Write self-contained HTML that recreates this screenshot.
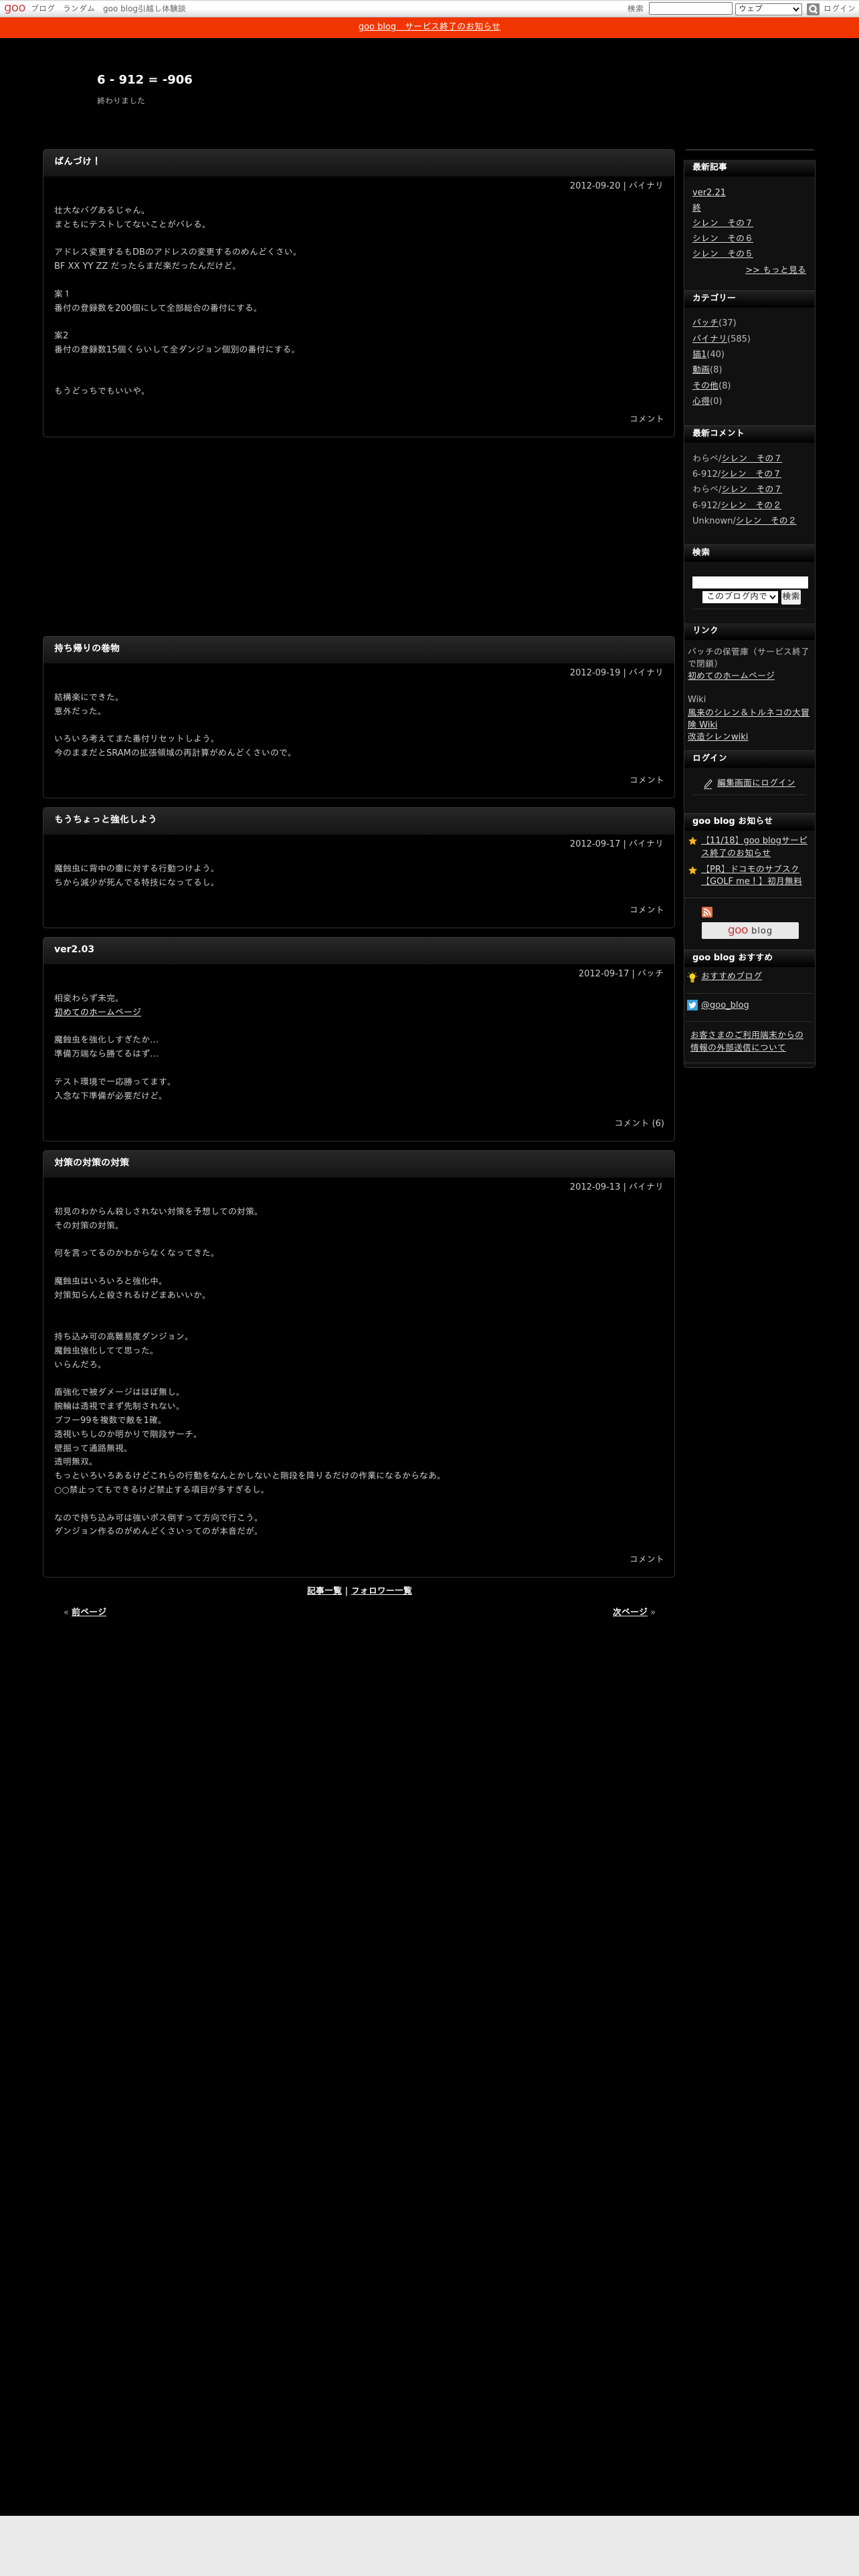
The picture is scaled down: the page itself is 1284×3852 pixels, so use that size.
<!DOCTYPE html>
<html lang="ja"><head><meta charset="utf-8"><title>6 - 912 = -906</title>
<style>
html,body{margin:0;padding:0;background:#e9e9e9}
#page{position:relative;width:1284px;height:3852px;overflow:hidden;background:#e9e9e9;font-family:"DejaVu Sans","IPAGothic",sans-serif;font-size:13px;color:#ccc}
#black{position:absolute;left:0;top:0;width:1284px;height:3762px;background:#000}
.a{position:absolute;white-space:nowrap}
a{color:#eee;text-decoration:underline}
#top{position:absolute;left:0;top:0;width:1284px;height:26px;border-top:1px solid #ccc;box-sizing:border-box;background:linear-gradient(#fff 0,#fff 50%,#ddd 100%);border-bottom:1px solid #bbb}
#top .a{font-size:12px;color:#666;line-height:16px;top:4px}
#notice{position:absolute;left:0;top:26px;width:1284px;height:31px;background:#f03500;text-align:center;line-height:30px;font-size:13px}
#notice a{color:#fff}
.post{position:absolute;left:64px;width:945px;box-sizing:border-box;border:1px solid #333;border-radius:5px;background:#000}
.post h2{margin:0;height:40px;padding:0 0 0 16px;line-height:37px;font-size:14px;font-weight:bold;color:#fff;background:linear-gradient(#282828,#141414);border-radius:4px 4px 0 0}
.post .d{position:absolute;right:16px;top:46px;line-height:18px;font-size:13px;white-space:nowrap}
.post .b{position:absolute;left:16px;top:82px;line-height:20.8px;font-size:13px;white-space:nowrap}
.post .c{position:absolute;right:15px;bottom:16px;line-height:18px;font-size:13px;white-space:nowrap}
#side{position:absolute;left:1022px;top:223px;width:197px;height:1374px;box-sizing:border-box;border:1px solid #333;border-top:2px solid #333;border-radius:5px;background:#111}
#cap{position:absolute;left:1022px;top:225px;width:197px;height:14px;background:#000}
.sh{position:absolute;left:1023px;width:195px;height:25px;background:linear-gradient(#222,#000);color:#fff;font-weight:bold;font-size:13px;line-height:24px;padding-left:12px;box-sizing:border-box}
.dv{position:absolute;left:1023px;width:195px;height:1px;background:#333}
.ln{position:absolute;height:1px;background:#2c2c2c}
.s{position:absolute;white-space:nowrap;line-height:18px;font-size:13px;color:#bbb}
.s a{color:#ddd}
</style></head><body>
<div id="page">
<div id="black"></div>

<div id="top">
<span class="a" style="left:6px;top:0;font-size:18px;line-height:22px;color:#c4444a;letter-spacing:-.5px">goo</span>
<span class="a" style="left:46px">ブログ</span>
<span class="a" style="left:94px">ランダム</span>
<span class="a" style="left:154px">goo blog引越し体験談</span>
<span class="a" style="left:938px">検索</span>
<span class="a" style="left:970px;top:2px;width:125px;height:19px;box-sizing:border-box;background:#fff;border:1px solid #777;border-radius:2px"></span>
<span class="a" style="left:1099px;top:4px;width:100px;height:18px;box-sizing:border-box;background:#fff;border:1px solid #777;border-radius:2px;line-height:15px;padding-left:4px;color:#333">ウェブ<svg style="position:absolute;right:3px;top:4px" width="10" height="8" viewBox="0 0 10 8"><path d="M1 1.5L5 6L9 1.5" fill="none" stroke="#111" stroke-width="2"/></svg></span>
<svg class="a" style="left:1206px;top:4px" width="19" height="18" viewBox="0 0 19 18"><rect width="19" height="18" rx="2" fill="#888"/><circle cx="9" cy="8" r="4.5" fill="none" stroke="#fff" stroke-width="2.4"/><path d="M12 11l3 4" stroke="#fff" stroke-width="2.4"/></svg>
<span class="a" style="left:1231px">ログイン</span>
</div>
<div id="notice"><a href="#">goo blog　サービス終了のお知らせ</a></div>

<div class="a" style="left:145px;top:108px;font-size:18px;line-height:24px;font-weight:bold;color:#fff">6 - 912 = -906</div>
<div class="a" style="left:145px;top:142px;font-size:12px;line-height:18px;color:#bbb">終わりました</div>

<div class="post" style="top:223px;height:431px"><h2>ばんづけ！</h2>
<div class="d">2012-09-20 | バイナリ</div>
<div class="b">壮大なバグあるじゃん。<br>まともにテストしてないことがバレる。<br><br>アドレス変更するもDBのアドレスの変更するのめんどくさい。<br>BF XX YY ZZ だったらまだ楽だったんだけど。<br><br>案１<br>番付の登録数を200個にして全部総合の番付にする。<br><br>案2<br>番付の登録数15個くらいして全ダンジョン個別の番付にする。<br><br><br>もうどっちでもいいや。</div>
<div class="c">コメント</div></div>

<div class="post" style="top:951px;height:243px"><h2>持ち帰りの巻物</h2>
<div class="d">2012-09-19 | バイナリ</div>
<div class="b">結構楽にできた。<br>意外だった。<br><br>いろいろ考えてまた番付リセットしよう。<br>今のままだとSRAMの拡張領域の再計算がめんどくさいので。</div>
<div class="c">コメント</div></div>

<div class="post" style="top:1207px;height:181px"><h2>もうちょっと強化しよう</h2>
<div class="d">2012-09-17 | バイナリ</div>
<div class="b">魔蝕虫に背中の壷に対する行動つけよう。<br>ちから減少が死んでる特技になってるし。</div>
<div class="c">コメント</div></div>

<div class="post" style="top:1401px;height:306px"><h2>ver2.03</h2>
<div class="d">2012-09-17 | バッチ</div>
<div class="b">相変わらず未完。<br><a href="#">初めてのホームページ</a><br><br>魔蝕虫を強化しすぎたか…<br>準備万端なら勝てるはず…<br><br>テスト環境で一応勝ってます。<br>入念な下準備が必要だけど。</div>
<div class="c">コメント (6)</div></div>

<div class="post" style="top:1720px;height:639px"><h2>対策の対策の対策</h2>
<div class="d">2012-09-13 | バイナリ</div>
<div class="b">初見のわからん殺しされない対策を予想しての対策。<br>その対策の対策。<br><br>何を言ってるのかわからなくなってきた。<br><br>魔蝕虫はいろいろと強化中。<br>対策知らんと殺されるけどまあいいか。<br><br><br>持ち込み可の高難易度ダンジョン。<br>魔蝕虫強化してて思った。<br>いらんだろ。<br><br>盾強化で被ダメージはほぼ無し。<br>腕輪は透視でまず先制されない。<br>ブフー99を複数で敵を1確。<br>透視いちしのか明かりで階段サーチ。<br>壁掘って通路無視。<br>透明無双。<br>もっといろいろあるけどこれらの行動をなんとかしないと階段を降りるだけの作業になるからなあ。<br>○○禁止ってもできるけど禁止する項目が多すぎるし。<br><br>なので持ち込み可は強いボス倒すって方向で行こう。<br>ダンジョン作るのがめんどくさいってのが本音だが。</div>
<div class="c">コメント</div></div>

<div class="a" style="left:459px;top:2371px;line-height:18px;font-weight:bold;color:#ddd"><a href="#">記事一覧</a> | <a href="#">フォロワー一覧</a></div>
<div class="a" style="left:95px;top:2403px;line-height:18px;color:#aaa">« <a href="#" style="font-weight:bold">前ページ</a></div>
<div class="a" style="left:916px;top:2403px;line-height:18px;color:#aaa"><a href="#" style="font-weight:bold">次ページ</a> »</div>

<div id="side"></div><div id="cap"></div>

<div class="sh" style="top:239px">最新記事</div>
<div class="s" style="left:1035px;top:280px"><a href="#">ver2.21</a></div>
<div class="s" style="left:1035px;top:303px"><a href="#">終</a></div>
<div class="s" style="left:1035px;top:326px"><a href="#">シレン　その７</a></div>
<div class="s" style="left:1035px;top:349px"><a href="#">シレン　その６</a></div>
<div class="s" style="left:1035px;top:372px"><a href="#">シレン　その５</a></div>
<div class="s" style="right:79px;top:396px"><a href="#">&gt;&gt; もっと見る</a></div>
<div class="dv" style="top:434px"></div>

<div class="sh" style="top:435px">カテゴリー</div>
<div class="s" style="left:1035px;top:475px"><a href="#">バッチ</a>(37)</div>
<div class="s" style="left:1035px;top:499px"><a href="#">バイナリ</a>(585)</div>
<div class="s" style="left:1035px;top:522px"><a href="#">猫1</a>(40)</div>
<div class="s" style="left:1035px;top:545px"><a href="#">動画</a>(8)</div>
<div class="s" style="left:1035px;top:569px"><a href="#">その他</a>(8)</div>
<div class="s" style="left:1035px;top:592px"><a href="#">心得</a>(0)</div>
<div class="dv" style="top:636px"></div>

<div class="sh" style="top:637px">最新コメント</div>
<div class="s" style="left:1035px;top:678px">わらべ/<a href="#">シレン　その７</a></div>
<div class="s" style="left:1035px;top:701px">6-912/<a href="#">シレン　その７</a></div>
<div class="s" style="left:1035px;top:724px">わらべ/<a href="#">シレン　その７</a></div>
<div class="s" style="left:1035px;top:748px">6-912/<a href="#">シレン　その２</a></div>
<div class="s" style="left:1035px;top:771px">Unknown/<a href="#">シレン　その２</a></div>
<div class="dv" style="top:814px"></div>

<div class="sh" style="top:815px">検索</div>
<div class="a" style="left:1035px;top:862px;width:173px;height:18px;background:#fff"></div>
<div class="a" style="left:1050px;top:884px;width:113px;height:18px;background:#fff;color:#222;line-height:17px;padding-left:6px;box-sizing:border-box">このブログ内で<svg style="position:absolute;right:3px;top:5px" width="10" height="8" viewBox="0 0 10 8"><path d="M1 1.5L5 6L9 1.5" fill="none" stroke="#111" stroke-width="2"/></svg></div>
<div class="a" style="left:1168px;top:882px;width:29px;height:22px;background:#efefef;color:#222;line-height:21px;text-align:center;border-radius:2px">検索</div>
<div class="ln" style="left:1037px;top:910px;width:166px"></div>

<div class="sh" style="top:932px">リンク</div>
<div class="s" style="left:1028px;top:967px">バッチの保管庫（サービス終了</div>
<div class="s" style="left:1028px;top:985px">で閉鎖）</div>
<div class="s" style="left:1028px;top:1003px"><a href="#">初めてのホームページ</a></div>
<div class="s" style="left:1028px;top:1038px">Wiki</div>
<div class="s" style="left:1028px;top:1058px"><a href="#">風来のシレン＆トルネコの大冒</a></div>
<div class="s" style="left:1028px;top:1076px"><a href="#">険 Wiki</a></div>
<div class="s" style="left:1028px;top:1094px"><a href="#">改造シレンwiki</a></div>
<div class="dv" style="top:1122px"></div>

<div class="sh" style="top:1123px">ログイン</div>
<svg class="a" style="left:1051px;top:1164px" width="15" height="17" viewBox="0 0 15 17"><path d="M1 15.500H13M3 11L11 2L13 4L5 13L2.500 13.500Z" fill="none" stroke="#ddd" stroke-width="1.100"/></svg>
<div class="s" style="left:1072px;top:1163px"><a href="#">編集画面にログイン</a></div>
<div class="ln" style="left:1035px;top:1188px;width:170px"></div>
<div class="dv" style="top:1216px"></div>

<div class="sh" style="top:1217px">goo blog お知らせ</div>
<svg class="a" style="left:1029px;top:1251px" width="13" height="13" viewBox="0 0 20 20"><path d="M10 0l3 6.600 7 .8-5.200 4.800 1.400 7L10 15.700 3.800 19.200l1.400-7L0 7.400l7-.8z" fill="#f5b81a"/></svg>
<div class="s" style="left:1048px;top:1249px"><a href="#">【11/18】goo blogサービ</a></div>
<div class="s" style="left:1048px;top:1268px"><a href="#">ス終了のお知らせ</a></div>
<svg class="a" style="left:1029px;top:1295px" width="13" height="13" viewBox="0 0 20 20"><path d="M10 0l3 6.600 7 .8-5.200 4.800 1.400 7L10 15.700 3.800 19.200l1.400-7L0 7.400l7-.8z" fill="#f5b81a"/></svg>
<div class="s" style="left:1048px;top:1292px"><a href="#">【PR】ドコモのサブスク</a></div>
<div class="s" style="left:1048px;top:1310px"><a href="#">【GOLF me！】初月無料</a></div>
<div class="dv" style="top:1342px"></div>

<svg class="a" style="left:1049px;top:1356px" width="16" height="16" viewBox="0 0 16 16"><rect width="16" height="16" rx="2" fill="#e0724a"/><circle cx="4" cy="12" r="1.700" fill="#fff"/><path d="M3 7.500a5.500 5.500 0 0 1 5.500 5.500M3 3.500a9.500 9.500 0 0 1 9.500 9.500" fill="none" stroke="#fff" stroke-width="2"/></svg>
<div class="a" style="left:1049px;top:1379px;width:145px;height:25px;background:#e8e8e8;border-radius:2px;text-align:center;line-height:24px;font-size:13px;color:#333;letter-spacing:1px"><span style="color:#c8383a;font-size:17px;letter-spacing:-.5px">goo</span> blog</div>
<div class="dv" style="top:1420px"></div>

<div class="sh" style="top:1421px">goo blog おすすめ</div>
<svg class="a" style="left:1027px;top:1453px" width="16" height="17" viewBox="0 0 16 17"><circle cx="8" cy="7" r="4.500" fill="#f3d21f"/><rect x="5.500" y="10.500" width="5" height="5.500" fill="#e0b010"/><path d="M8 0v1.500M.5 7H2M14 7h1.500M2.500 1.500l1.200 1.200M13.500 1.500l-1.200 1.200" stroke="#f3d21f"/></svg>
<div class="s" style="left:1048px;top:1452px"><a href="#">おすすめブログ</a></div>
<div class="ln" style="left:1025px;top:1485px;width:190px"></div>
<svg class="a" style="left:1027px;top:1495px" width="16" height="16" viewBox="0 0 16 16"><rect width="16" height="16" fill="#3a9fd8"/><path d="M13.500 4.500c-.5.200-1 .4-1.400.4.500-.3.900-.8 1-1.300-.5.300-1 .5-1.500.6a2.400 2.400 0 0 0-4.100 2.200C6 6.300 4.300 5.400 3.100 4c-.6 1.100-.3 2.400.7 3.100-.4 0-.7-.1-1-.3 0 1.100.8 2.100 1.900 2.400-.3.100-.7.100-1 0 .3.900 1.200 1.600 2.200 1.600-1 .8-2.200 1.100-3.500 1 4.900 3 10.700-.5 10.500-6.400.4-.3.700-.6.600-.9z" fill="#fff"/></svg>
<div class="s" style="left:1048px;top:1495px"><a href="#">@goo_blog</a></div>
<div class="ln" style="left:1025px;top:1527px;width:190px"></div>
<div class="s" style="left:1032px;top:1540px"><a href="#">お客さまのご利用端末からの</a></div>
<div class="s" style="left:1032px;top:1559px"><a href="#">情報の外部送信について</a></div>
<div class="ln" style="left:1023px;top:1589px;width:195px;background:#333"></div>
</div>
</body></html>
